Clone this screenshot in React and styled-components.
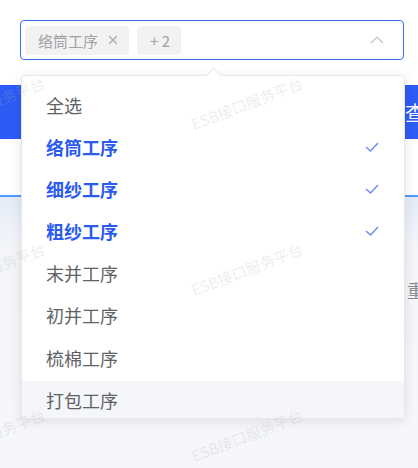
import styled, { createGlobalStyle } from 'styled-components';

const selected = ['络筒工序', '细纱工序', '粗纱工序'];
const options = ['全选', '络筒工序', '细纱工序', '粗纱工序', '末并工序', '初并工序', '梳棉工序', '打包工序'];
const marks = [
    { x: -66, y: 104 },
    { x: 192, y: 104 },
    { x: -66, y: 270 },
    { x: 192, y: 270 },
    { x: -66, y: 436 },
    { x: 192, y: 436 },
];

export default function App() {
    return (
        <Page>
            <GlobalStyle />
            <Top>
                <SelectBox>
                    <Tag>
                        {selected[0]}
                        <CloseIcon viewBox="0 0 10 10">
                            <path d="M1 1 L9 9 M9 1 L1 9" />
                        </CloseIcon>
                    </Tag>
                    <Tag>+ 2</Tag>
                    <Arrow viewBox="0 0 14 8">
                        <polyline points="1,7 7,1 13,7" />
                    </Arrow>
                </SelectBox>
            </Top>
            <Header>
                <HeaderText>查询</HeaderText>
            </Header>
            <Band />
            <Content>
                <GrayText>重置</GrayText>
            </Content>

            <Dropdown>
                <Caret />
                <List>
                    {options.map((o) => {
                        const on = selected.includes(o);
                        return (
                            <Item key={o} $on={on} $hover={o === '打包工序'}>
                                {o}
                                {on && (
                                    <CheckIcon viewBox="0 0 14 10">
                                        <polyline points="1,5 5.5,9 13,1" />
                                    </CheckIcon>
                                )}
                            </Item>
                        );
                    })}
                </List>
            </Dropdown>

            <Watermarks>
                {marks.map((m, i) => (
                    <Mark key={i} style={{ left: m.x, top: m.y }}>
                        ESB接口服务平台
                    </Mark>
                ))}
            </Watermarks>
        </Page>
    );
}

// Styled components

const GlobalStyle = createGlobalStyle`
    body {
        margin: 0;
        font-family: "Noto Sans CJK SC", "Noto Sans", sans-serif;
        background: #fff;
    }
`;

const Page = styled.div`
    position: relative;
    width: 418px;
    height: 468px;
    overflow: hidden;
    background: #fff;
    display: flex;
    flex-direction: column;
`;

const Top = styled.div`
    flex: none;
    padding: 20px 14px 0 20px;
    height: 85px;
    box-sizing: border-box;
`;

const SelectBox = styled.div`
    position: relative;
    height: 40px;
    box-sizing: border-box;
    border: 1px solid #3c6cf3;
    border-radius: 4px;
    display: flex;
    align-items: center;
    gap: 8px;
    padding: 0 4px;
`;

const Tag = styled.span`
    height: 29px;
    display: inline-flex;
    align-items: center;
    gap: 10px;
    padding: 0 11px 0 13px;
    background: #f2f2f3;
    border-radius: 4px;
    color: #a0a3a8;
    font-size: 15px;
    white-space: nowrap;
`;

const CloseIcon = styled.svg`
    width: 10px;
    height: 10px;
    fill: none;
    stroke: #a7a9ad;
    stroke-width: 1.1;
`;

const Arrow = styled.svg`
    margin-left: auto;
    margin-right: 15px;
    width: 14px;
    height: 8px;
    fill: none;
    stroke: #c0c4cc;
    stroke-width: 1.2;
`;

const Header = styled.div`
    flex: none;
    height: 54px;
    background: #2d5cf5;
    display: flex;
    align-items: center;
    padding-left: 405px;
    overflow: hidden;
`;

const HeaderText = styled.span`
    color: #fff;
    font-size: 20px;
    white-space: nowrap;
`;

const Band = styled.div`
    flex: none;
    height: 56px;
    background: #fff;
    border-bottom: 2px solid #4d9cfb;
`;

const Content = styled.div`
    flex: 1;
    min-height: 0;
    background: linear-gradient(#e4ebf8, #f3f5f9 50px, #f6f7fa);
    padding: 80px 0 0 407px;
    overflow: hidden;
`;

const GrayText = styled.span`
    color: #8a8d93;
    font-size: 18px;
    white-space: nowrap;
`;

const Dropdown = styled.div`
    position: absolute;
    left: 21px;
    top: 75px;
    width: 384px;
    height: 344px;
    box-sizing: border-box;
    background: #fff;
    border: 1px solid #e6e8ee;
    border-radius: 4px;
    box-shadow: 0 2px 12px rgba(0, 0, 0, 0.1);
`;

const Caret = styled.div`
    position: absolute;
    top: -6px;
    left: 186px;
    width: 10px;
    height: 10px;
    background: #fff;
    border-top: 1px solid #e6e8ee;
    border-left: 1px solid #e6e8ee;
    transform: rotate(45deg);
`;

const List = styled.div`
    height: 100%;
    overflow: hidden;
    padding-top: 9.5px;
    display: flex;
    flex-direction: column;
    gap: 4.2px;
    box-sizing: border-box;
`;

const Item = styled.div`
    flex: none;
    height: 38px;
    display: flex;
    align-items: center;
    justify-content: space-between;
    padding: 0 25px 0 24px;
    font-size: 18px;
    color: ${(p) => (p.$on ? '#2c5bf0' : '#606266')};
    font-weight: ${(p) => (p.$on ? 700 : 400)};
    background: ${(p) => (p.$hover ? '#f5f6fa' : 'transparent')};
`;

const CheckIcon = styled.svg`
    width: 14px;
    height: 10px;
    fill: none;
    stroke: #6b8af6;
    stroke-width: 1.4;
`;

const Watermarks = styled.div`
    position: absolute;
    inset: 0;
    pointer-events: none;
    overflow: hidden;
`;

const Mark = styled.span`
    position: absolute;
    font-size: 15px;
    white-space: nowrap;
    color: rgba(170, 170, 175, 0.22);
    transform: translateY(-50%) rotate(-21deg);
    transform-origin: left center;
    margin-top: 20px;
`;
